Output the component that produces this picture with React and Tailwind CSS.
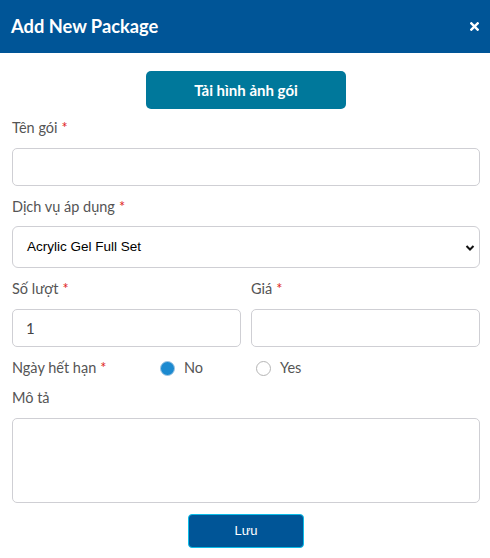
import React from "react";

function Label({ children, required, className = "" }) {
  return (
    <div className={"h-[20px] leading-[20px] text-[14.5px] text-[#555] " + className}>
      {children}
      {required && <span className="text-[#e02424] ml-[4px]">*</span>}
    </div>
  );
}

function Radio({ checked, label, className = "" }) {
  return (
    <div className={"flex items-center " + className}>
      {checked ? (
        <span className="w-[15px] h-[15px] rounded-full border border-[#9ec5e3] bg-[#1c8ad0]" />
      ) : (
        <span className="w-[15px] h-[15px] rounded-full border border-[#b5b5b5] bg-white" />
      )}
      <span className="ml-[9px] text-[14.5px] text-[#555]">{label}</span>
    </div>
  );
}

export default function App() {
  const font = { fontFamily: "Lato, 'Noto Sans', sans-serif" };
  return (
    <div className="w-[490px] h-[558px] bg-white" style={font}>
      <div className="h-[53px] bg-[#005597] flex items-center justify-between pl-[11px] pr-[11px]">
        <div className="text-white text-[18.3px] font-bold">Add New Package</div>
        <svg width="9" height="9" viewBox="0 0 10 10">
          <path d="M1.5 1.5 L8.5 8.5 M8.5 1.5 L1.5 8.5" stroke="white" strokeWidth="2.6" strokeLinecap="square" />
        </svg>
      </div>
      <div className="pl-[12px] pr-[10px]">
        <div className="pt-[18px] flex justify-center">
          <button className="w-[200px] h-[38px] rounded-[5px] bg-[#00789b] text-white text-[15px] font-bold">
            Tải hình ảnh gói
          </button>
        </div>
        <Label required className="mt-[9px]">Tên gói</Label>
        <input className="mt-[10px] block w-full h-[38px] border border-[#cfcfd4] rounded-[5px] outline-none" />
        <Label required className="mt-[11px]">Dịch vụ áp dụng</Label>
        <div className="mt-[9px] relative h-[42px] border border-[#cfcfd4] rounded-[6px] flex items-center pl-[14px]">
          <span className="text-[13.5px] text-black" style={{ fontFamily: "'Liberation Sans', Arial, sans-serif" }}>
            Acrylic Gel Full Set
          </span>
          <svg width="10" height="8" viewBox="0 0 10 8" className="absolute right-[4px] top-[17px]">
            <path d="M1.5 2 L5 5.5 L8.5 2" stroke="#111" strokeWidth="2" fill="none" />
          </svg>
        </div>
        <div className="mt-[11px] grid grid-cols-2 gap-x-[10px]">
          <div>
            <Label required>Số lượt</Label>
            <div className="mt-[10px] h-[38px] border border-[#cfcfd4] rounded-[5px] flex items-center pl-[13px] text-[15px] text-[#444]">
              1
            </div>
          </div>
          <div>
            <Label required>Giá</Label>
            <div className="mt-[10px] h-[38px] border border-[#cfcfd4] rounded-[5px]" />
          </div>
        </div>
        <div className="mt-[11px] h-[20px] flex items-center">
          <div className="w-[148px]">
            <Label required>Ngày hết hạn</Label>
          </div>
          <Radio checked label="No" className="w-[96px]" />
          <Radio label="Yes" />
        </div>
        <Label className="mt-[10px]">Mô tả</Label>
        <div className="mt-[10px] h-[85px] border border-[#cfcfd4] rounded-[5px]" />
        <div className="mt-[11px] flex justify-center">
          <button
            className="w-[116px] h-[34px] rounded-[4px] bg-[#005597] border border-[#0bbde8] text-white text-[13px]"
            style={{ fontFamily: "'Liberation Sans', Arial, sans-serif" }}
          >
            Lưu
          </button>
        </div>
      </div>
    </div>
  );
}
